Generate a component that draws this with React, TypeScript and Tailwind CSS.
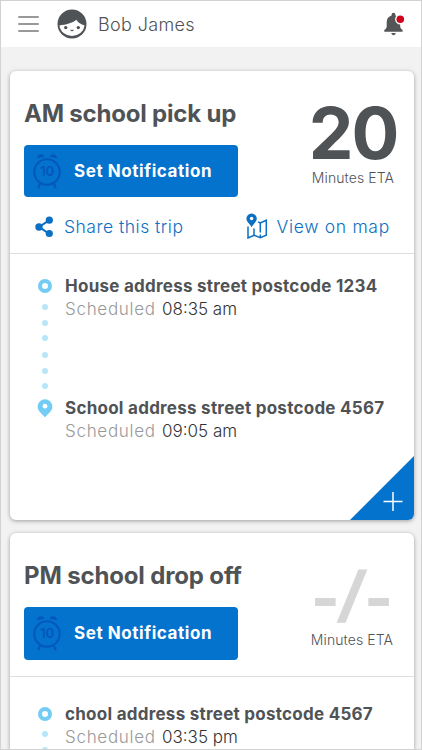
import type { ReactNode } from 'react';

function Avatar() {
  return (
    <svg className="h-[30px] w-[30px]" viewBox="0 0 30 30">
      <circle cx="15" cy="15" r="14.500" fill="#505356" />
      <path d="M2.400 16.400C9 15.800 15.500 14 19.300 10.800C21 13.500 24 15.600 27.600 16.400A12.700 12 0 0 1 2.400 16.400Z" fill="#fff" />
      <circle cx="8.700" cy="18.600" r="1.700" fill="#505356" />
      <circle cx="21.300" cy="18.600" r="1.700" fill="#505356" />
      <path d="M13.500 21.200Q15 23 16.500 21.200Z" fill="#505356" stroke="#505356" strokeWidth=".6" />
    </svg>
  );
}

function Bell() {
  return (
    <svg className="h-6 w-5" viewBox="0 0 20 24">
      <path d="M9.500.8a1.900 1.900 0 0 1 1.900 1.900v.7c3 .8 4.800 3.300 4.800 6.600v4.200c0 1.700 1.100 2.800 2.400 3.900v1.700H.3v-1.700c1.400-1.100 2.400-2.200 2.400-3.900V10c0-3.300 1.900-5.800 4.900-6.600v-.7A1.900 1.900 0 0 1 9.500.8Z" fill="#535557" />
      <path d="M7.300 21h4.400c-.2 1.400-1.100 2.200-2.200 2.200S7.500 22.400 7.300 21Z" fill="#535557" />
      <circle cx="16.300" cy="7.200" r="5.200" fill="#fff" />
      <circle cx="16.300" cy="7.200" r="3.800" fill="#d0021b" />
    </svg>
  );
}

function AlarmIcon() {
  return (
    <div className="relative h-[36px] w-[28px]">
      <svg className="h-full w-full" viewBox="0 0 28 36">
        <circle cx="14" cy="19" r="12.700" fill="none" stroke="#0357bd" strokeWidth="2" />
        <path d="M3.800 5.200C4.500.8 9.500-.2 11.600 3.700ZM16.400 3.700C18.500-.2 23.500.8 24.200 5.200Z" fill="#0357bd" />
        <path d="M7 31 5.300 35M21 31l1.700 4" stroke="#0357bd" strokeWidth="2.200" />
      </svg>
      <span className="absolute inset-x-0 top-[8px] text-center text-[13px] font-bold leading-5 tracking-[-0.300px] text-[#0357bd]">10</span>
    </div>
  );
}

function ShareIcon() {
  return (
    <svg className="h-[22px] w-[19px]" viewBox="0 0 19 22">
      <path d="M14.500 4.200 4 11l10.500 6.800" fill="none" stroke="#0b6fc2" strokeWidth="2" />
      <circle cx="14.300" cy="4.200" r="3.600" fill="#0b6fc2" />
      <circle cx="4" cy="11" r="3.700" fill="#0b6fc2" />
      <circle cx="14.300" cy="17.500" r="3.600" fill="#0b6fc2" />
    </svg>
  );
}

function MapIcon() {
  return (
    <svg className="h-[26px] w-[22px]" viewBox="0 0 22 26" fill="none" stroke="#0b6fc2" strokeWidth="1.500">
      <path d="M2 13.500V25l6-2.800 6.300 2.500 6-2.500V7.200l-6 2.700-2.300-1" />
      <path d="M8 15.500v6.700M14.300 9.900v9.600M14.300 21.500v3.200" strokeWidth="1.500" />
      <path d="M5.600.4a5.200 5.200 0 0 1 5.200 5.200c0 3.300-3.300 5-5.200 8.600C3.700 10.600.4 8.900.4 5.600A5.200 5.200 0 0 1 5.600.4Z" fill="#0b6fc2" stroke="none" />
      <circle cx="5.600" cy="5.500" r="1.700" fill="#fff" stroke="none" />
    </svg>
  );
}

function Ring() {
  return <div className="h-[14px] w-[14px] rounded-full border-[4.500px] border-[#73ccf3]" />;
}

function Dot({ className }: { className: string }) {
  return <div className={`h-[6px] w-[6px] rounded-full bg-[#b8e5f8] ${className}`} />;
}

function Pin() {
  return (
    <svg className="h-[19px] w-[16px]" viewBox="0 0 16 19">
      <path d="M8 .3a7.400 7.400 0 0 1 7.400 7.400c0 4.500-4.400 6.600-7.400 10.600C5 14.300.6 12.200.6 7.700A7.400 7.400 0 0 1 8 .3Z" fill="#73ccf3" />
      <circle cx="8" cy="7.200" r="2.400" fill="#fff" />
    </svg>
  );
}

function Scheduled({ time }: { time: ReactNode }) {
  return (
    <p className="flex whitespace-nowrap text-[17px] font-light leading-[23px] text-[#333]">
      <span className="w-[97px] tracking-[0.700px] text-[#999]">Scheduled</span>
      {time}
    </p>
  );
}

function SetNotification() {
  return (
    <button className="flex h-[52.500px] w-[214px] items-center rounded-[4px] bg-[#0373cd] pl-[9px] text-white">
      <AlarmIcon />
      <span className="ml-[13px] mt-[1px] whitespace-nowrap text-[17px] font-bold tracking-[0.560px]">Set Notification</span>
    </button>
  );
}

export default function App() {
  return (
    <div className="flex h-[750px] w-[422px] flex-col overflow-hidden border border-[#d2d2d2] bg-[#f2f2f2] font-['Inter',sans-serif] text-[#505356]">
      <header className="flex h-[46px] shrink-0 items-center bg-white pl-[17px] pr-[17px]">
        <div className="flex w-[21px] flex-col gap-[5px]">
          <div className="h-[2px] rounded bg-[#999]" />
          <div className="h-[2px] rounded bg-[#999]" />
          <div className="h-[2px] rounded bg-[#999]" />
        </div>
        <div className="ml-[18px]"><Avatar /></div>
        <h1 className="ml-[11px] mt-[2px] flex-1 whitespace-nowrap text-[18px] font-light leading-6 tracking-[0.350px]">Bob James</h1>
        <Bell />
      </header>

      <main className="flex flex-col gap-[13px] pl-[9px] pr-[7.500px] pt-[24px]">
        <section className="relative h-[449px] shrink-0 rounded-[6px] bg-white shadow-[0_1px_4px_rgba(0,0,0,0.35)]">
          <div className="h-[183px] border-b border-[#dedede] pl-[14px] pt-[27px]">
            <div className="flex">
              <div className="w-[214px]">
                <h2 className="mb-[14.500px] whitespace-nowrap text-[24px] font-bold leading-8 tracking-[-0.200px]">AM school pick up</h2>
                <SetNotification />
              </div>
              <div className="ml-[62px] mt-[7px] flex w-[106px] flex-col items-center">
                <div className="whitespace-nowrap text-[71px] font-bold leading-[56px] tracking-[-2px]">20</div>
                <div className="mt-[7px] whitespace-nowrap text-[14px] font-light leading-5 tracking-[0.100px]">Minutes ETA</div>
              </div>
            </div>
            <div className="mt-[17.500px] flex h-6 items-center whitespace-nowrap text-[17.500px] font-light leading-6 text-[#0b6fc2]">
              <a className="flex w-[222px] items-center pl-[11px]"><ShareIcon /><span className="ml-[10px] mt-[1px] tracking-[0.500px]">Share this trip</span></a>
              <a className="flex items-center"><span className="-mt-[2px]"><MapIcon /></span><span className="ml-[8.500px] mt-[1px] tracking-[0.680px]">View on map</span></a>
            </div>
          </div>
          <div className="flex pt-[21px]">
            <div className="flex w-[55px] shrink-0 flex-col items-center pl-[14px] pt-[4px]">
              <Ring />
              <Dot className="mt-[10.500px]" />
              <Dot className="mt-[10.500px]" />
              <Dot className="mt-[9px]" />
              <Dot className="mt-[10.500px]" />
              <Dot className="mt-[10.500px]" />
              <Dot className="mt-[9px]" />
              <span className="mt-[10px]"><Pin /></span>
            </div>
            <div className="whitespace-nowrap leading-[23px]">
              <h3 className="text-[17px] font-bold leading-[23px] tracking-[0.260px]">House address street postcode 1234</h3>
              <Scheduled time="08:35 am" />
              <h3 className="mt-[76px] text-[17px] font-bold leading-[23px] tracking-[0.260px]">School address street postcode 4567</h3>
              <Scheduled time="09:05 am" />
            </div>
          </div>
          <button className="absolute bottom-0 right-0 h-[64px] w-[64px] overflow-hidden rounded-br-[6px]" aria-label="Add">
            <svg className="h-full w-full" viewBox="0 0 64 64">
              <path d="M64 0v64H0Z" fill="#0373cd" />
              <path d="M43 36v19M33.500 45.500h19" stroke="#fff" strokeWidth="1.500" />
            </svg>
          </button>
        </section>

        <section className="h-[449px] shrink-0 rounded-[6px] bg-white shadow-[0_1px_4px_rgba(0,0,0,0.35)]">
          <div className="h-[144px] border-b border-[#dedede] pl-[14px] pt-[27px]">
            <div className="flex">
              <div className="w-[214px]">
                <h2 className="mb-[15px] whitespace-nowrap text-[24px] font-bold leading-8 tracking-[-0.150px]">PM school drop off</h2>
                <SetNotification />
              </div>
              <div className="ml-[60px] mt-[7px] flex w-[108px] flex-col items-center">
                <div className="flex whitespace-nowrap text-[61px] font-extrabold leading-[56px] text-[#d6d6d6]">
                  <span className="mt-[3px]">-</span>
                  <span className="-mt-[1px] mb-[1px] -skew-x-[8deg]">/</span>
                  <span className="mt-[3px]">-</span>
                </div>
                <div className="mt-[4px] whitespace-nowrap text-[14px] font-light leading-5 tracking-[0.100px]">Minutes ETA</div>
              </div>
            </div>
          </div>
          <div className="flex pt-[25.500px]">
            <div className="flex w-[55px] shrink-0 flex-col items-center pl-[14px] pt-[4px]">
              <Ring />
              <Dot className="mt-[10px]" />
              <Dot className="mt-[10px]" />
            </div>
            <div className="whitespace-nowrap">
              <h3 className="text-[17px] font-bold leading-[23px] tracking-[0.260px]">chool address street postcode 4567</h3>
              <Scheduled time="03:35 pm" />
            </div>
          </div>
        </section>
      </main>
    </div>
  );
}
